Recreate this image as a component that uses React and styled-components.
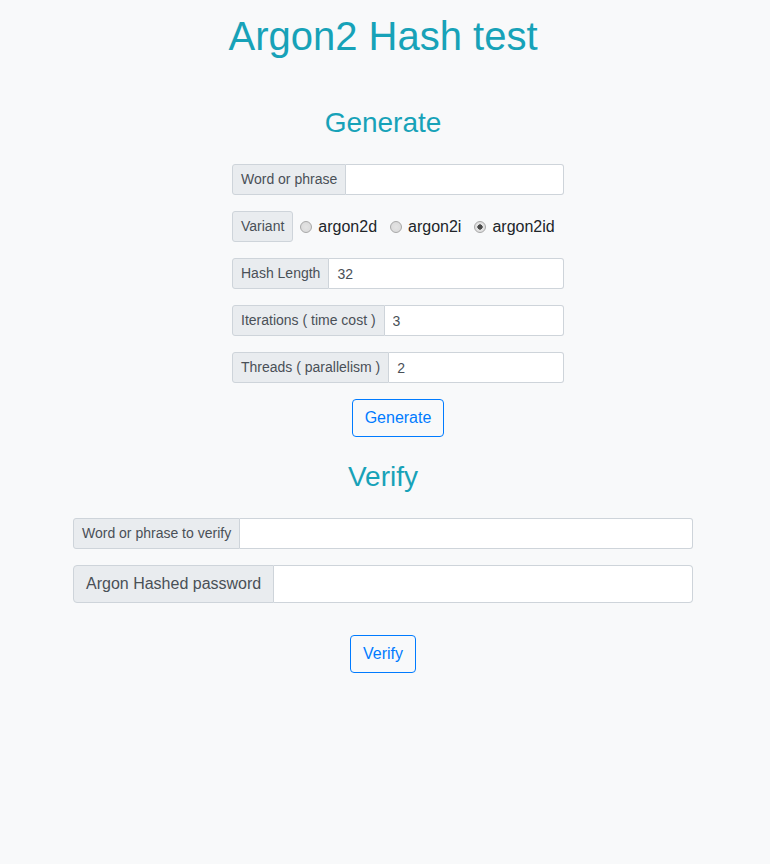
import React from 'react';
import styled, { createGlobalStyle } from 'styled-components';

const GlobalStyle = createGlobalStyle`
  * { box-sizing: border-box; }
  html, body { margin: 0; padding: 0; background: #f8f9fa; }
  body {
    font-family: "Liberation Sans", Arial, Helvetica, sans-serif;
    color: #212529;
    font-size: 16px;
    line-height: 1.5;
  }
`;

const Page = styled.main`
  width: 766px;
  min-height: 864px;
  padding-top: 12px;
  display: flex;
  flex-direction: column;
  align-items: center;
`;

const Title = styled.h1`
  margin: 0 0 46px;
  font-size: 40px;
  line-height: 48px;
  font-weight: 400;
  color: #17a2b8;
`;

const SectionTitle = styled.h3`
  margin: ${(p) => p.$mt || 0}px 0 ${(p) => p.$mb}px;
  font-size: 28px;
  line-height: 34px;
  font-weight: 400;
  color: #17a2b8;
`;

const Form = styled.form`
  width: ${(p) => p.$width}px;
  padding-left: ${(p) => p.$indent || 0}px;
  box-sizing: content-box;
  display: flex;
  flex-direction: column;
  gap: 16px;
  margin: 0;
`;

const InputGroup = styled.div`
  display: flex;
  align-items: stretch;
  height: ${(p) => (p.$large ? 38 : 31)}px;
`;

const Addon = styled.span`
  display: flex;
  align-items: center;
  white-space: nowrap;
  padding: ${(p) => (p.$large ? '0 12px' : '0 8px')};
  font-size: ${(p) => (p.$large ? 16 : 14)}px;
  line-height: 1.5;
  color: #495057;
  background: #e9ecef;
  border: 1px solid #ced4da;
  border-radius: ${(p) => (p.$large ? '4px 0 0 4px' : '3px 0 0 3px')};
  ${(p) => (p.$alone ? 'border-radius: 3px;' : '')}
`;

const Field = styled.input`
  flex: 1;
  min-width: 0;
  height: 100%;
  margin: 0;
  padding: ${(p) => (p.$large ? '0 12px' : '0 8px')};
  font-family: inherit;
  font-size: ${(p) => (p.$large ? 16 : 14)}px;
  color: #495057;
  background: #fff;
  border: 1px solid #ced4da;
  border-left: none;
  border-radius: ${(p) => (p.$large ? '0 4px 4px 0' : '0 3px 3px 0')};
  outline: none;
`;

const Options = styled.div`
  display: flex;
  align-items: center;
  gap: 13px;
  margin-left: 7px;
`;

const Option = styled.label`
  display: flex;
  align-items: center;
  gap: 6px;
  font-size: 16px;
  color: #212529;
  cursor: pointer;
`;

const Radio = styled.input`
  appearance: none;
  -webkit-appearance: none;
  width: 12px;
  height: 12px;
  margin: 0;
  border-radius: 50%;
  border: 1px solid #a8a8a8;
  background: radial-gradient(circle at 50% 50%, ${(p) => (p.checked ? '#4a4a4a 0 2.4px, #e4e4e4 2.9px' : '#e4e4e4 0')}, #d8d8d8 100%);
  cursor: pointer;
`;

const Button = styled.button`
  align-self: center;
  margin-top: ${(p) => p.$mt || 0}px;
  height: 38px;
  padding: 0 12px;
  font-family: inherit;
  font-size: 16px;
  line-height: 1.5;
  color: #007bff;
  background: transparent;
  border: 1px solid #007bff;
  border-radius: 4px;
  cursor: pointer;
`;

const variants = ['argon2d', 'argon2i', 'argon2id'];

export default function App() {
  const [variant, setVariant] = React.useState('argon2id');
  return (
    <>
      <GlobalStyle />
      <Page>
        <Title>Argon2 Hash test</Title>
        <SectionTitle $mb={24}>Generate</SectionTitle>
        <Form $width={332} $indent={30} onSubmit={(e) => e.preventDefault()}>
          <InputGroup>
            <Addon>Word or phrase</Addon>
            <Field type="text" />
          </InputGroup>
          <InputGroup>
            <Addon $alone>Variant</Addon>
            <Options>
              {variants.map((v) => (
                <Option key={v}>
                  <Radio
                    type="radio"
                    name="variant"
                    checked={variant === v}
                    onChange={() => setVariant(v)}
                  />
                  {v}
                </Option>
              ))}
            </Options>
          </InputGroup>
          <InputGroup>
            <Addon>Hash Length</Addon>
            <Field type="text" defaultValue="32" />
          </InputGroup>
          <InputGroup>
            <Addon>Iterations ( time cost )</Addon>
            <Field type="text" defaultValue="3" />
          </InputGroup>
          <InputGroup>
            <Addon>Threads ( parallelism )</Addon>
            <Field type="text" defaultValue="2" />
          </InputGroup>
          <Button type="submit">Generate</Button>
        </Form>
        <SectionTitle $mt={23} $mb={24}>Verify</SectionTitle>
        <Form $width={620} onSubmit={(e) => e.preventDefault()}>
          <InputGroup>
            <Addon>Word or phrase to verify</Addon>
            <Field type="text" />
          </InputGroup>
          <InputGroup $large>
            <Addon $large>Argon Hashed password</Addon>
            <Field type="text" $large />
          </InputGroup>
          <Button type="submit" $mt={16}>Verify</Button>
        </Form>
      </Page>
    </>
  );
}
